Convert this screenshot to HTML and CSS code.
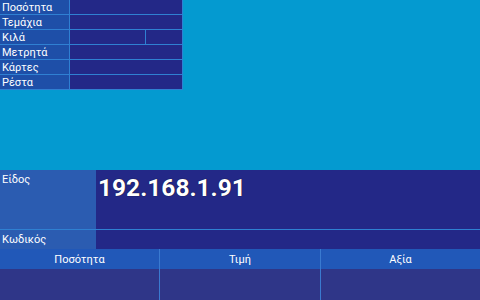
FILE: index.html
```html
<!DOCTYPE html>
<html>
<head>
<meta charset="utf-8">
<link rel="stylesheet" href="styles.css">
</head>
<body>
<div class="screen">
  <div class="top">
    <div class="info">
      <div class="lbl">Ποσότητα</div><div class="val"></div>
      <div class="lbl">Τεμάχια</div><div class="val"></div>
      <div class="lbl">Κιλά</div><div class="val split"><div class="v1"></div><div class="v2"></div></div>
      <div class="lbl">Μετρητά</div><div class="val"></div>
      <div class="lbl">Κάρτες</div><div class="val"></div>
      <div class="lbl">Ρέστα</div><div class="val"></div>
    </div>
  </div>
  <div class="bottom">
    <div class="item">
      <div class="item-lbl">Είδος</div>
      <div class="item-val">192.168.1.91</div>
    </div>
    <div class="code">
      <div class="code-lbl">Κωδικός</div>
      <div class="code-val"></div>
    </div>
    <div class="grid">
      <div class="hd">Ποσότητα</div>
      <div class="hd">Τιμή</div>
      <div class="hd">Αξία</div>
      <div class="cell"></div>
      <div class="cell"></div>
      <div class="cell"></div>
    </div>
  </div>
</div>
</body>
</html>
```
FILE: styles.css
```css
html, body { margin: 0; padding: 0; }
body {
  width: 480px; height: 300px; overflow: hidden;
  font-family: Roboto, "Noto Sans", sans-serif;
  color: #fff;
  background: #049ad0;
}
.screen { display: flex; flex-direction: column; height: 300px; }
.top { height: 170px; }
.info {
  width: 182px;
  display: grid;
  grid-template-columns: 69px 112px;
  grid-auto-rows: 14px;
  gap: 1px;
  padding: 0 1px 1px 0;
  background: #2f80d2;
}
.lbl {
  background: #1e4fa8;
  font-size: 11px;
  line-height: 15px;
  padding-left: 2px;
  white-space: nowrap;
}
.val { background: #232887; }
.val.split { display: flex; gap: 1px; background: #2f80d2; }
.v1 { width: 75px; background: #232887; }
.v2 { flex: 1; background: #232887; }

.bottom { flex: 1; display: flex; flex-direction: column; background: #2f80d2; }
.item { display: flex; height: 59px; }
.item-lbl {
  width: 96px; background: #2b5cb1;
  font-size: 11px; padding: 3px 0 0 2px; box-sizing: border-box;
}
.item-val {
  flex: 1; background: #232887;
  font-size: 24.5px; font-weight: 700;
  padding: 4px 0 0 2px;
  line-height: 28px;
  text-shadow: 0 0 1px #000;
}
.code { display: flex; height: 19px; margin-top: 1px; }
.code-lbl {
  width: 96px; background: #2b5cb1;
  font-size: 11px; line-height: 20px; padding-left: 2px; box-sizing: border-box;
}
.code-val { flex: 1; background: #232887; }
.grid {
  flex: 1;
  display: grid;
  grid-template-columns: 159px 160px 1fr;
  grid-template-rows: 20px 1fr;
  column-gap: 1px;
  background: #3a7ad0;
}
.hd {
  background: #2158b8;
  font-size: 11px; line-height: 22px; text-align: center;
}
.cell { background: #2f3688; }
```
